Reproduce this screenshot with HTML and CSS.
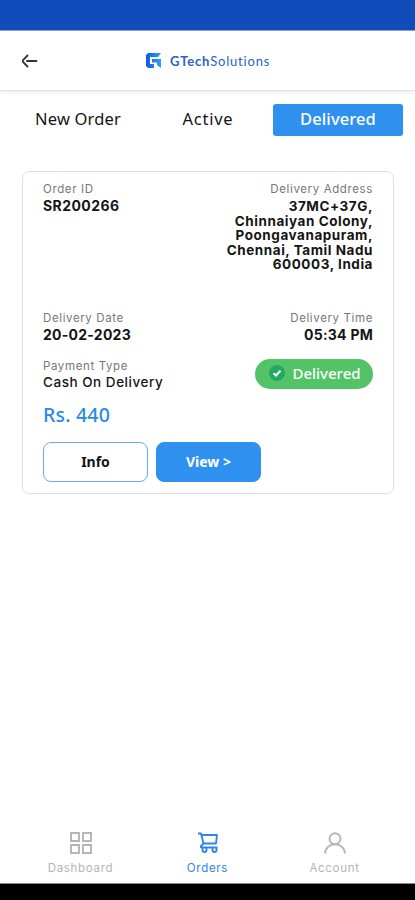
FILE: index.html
```html
<!DOCTYPE html>
<html lang="en">
<head>
<meta charset="utf-8">
<meta name="viewport" content="width=device-width, initial-scale=1">
<title>GTechSolutions Orders</title>
<link rel="stylesheet" href="styles.css">
</head>
<body>
<div class="status"></div>
<header class="header">
  <svg class="back" viewBox="0 0 16 14" fill="none" stroke="#333" stroke-width="1.800" stroke-linecap="round" stroke-linejoin="round"><path d="M14.500 7H5M5.500 1.500L1.200 5.800Q.3 7 1.200 8.200L5.500 12.500"/></svg>
  <div class="brand">
    <svg class="logo" viewBox="0 0 15 15"><defs><linearGradient id="g" x1="0" y1="0" x2="1" y2="0"><stop offset="0" stop-color="#1557e0"/><stop offset="1" stop-color="#2ba2f8"/></linearGradient></defs><path fill="url(#g)" d="M2 0H15L12 4H4V11H8V15H2L0 13V2ZM6 6H15V15L11 12V9.500H6Z"/></svg>
    <span class="name"><b>GTech</b>Solutions</span>
  </div>
</header>
<nav class="tabs">
  <a class="tab"><span class="t-new">New Order</span></a>
  <a class="tab"><span class="t-act">Active</span></a>
  <a class="tab on"><span class="t-del">Delivered</span></a>
</nav>
<main class="card">
  <div class="row first">
    <div><p class="label">Order ID</p><p class="value v-id">SR200266</p></div>
    <div class="right"><p class="label">Delivery Address</p>
      <p class="value address">37MC+37G,<br>Chinnaiyan Colony,<br>Poongavanapuram,<br>Chennai, Tamil Nadu<br>600003, India</p></div>
  </div>
  <div class="row second">
    <div><p class="label">Delivery Date</p><p class="value">20-02-2023</p></div>
    <div class="right"><p class="label">Delivery Time</p><p class="value">05:34 PM</p></div>
  </div>
  <div class="row third">
    <div><p class="label">Payment Type</p><p class="value cash">Cash On Delivery</p></div>
    <div class="pill"><svg viewBox="0 0 16 16"><circle cx="8" cy="8" r="8" fill="#24a865"/><path d="M4.500 8.200L7 10.500L11.500 5.700" fill="none" stroke="#fff" stroke-width="2"/></svg><span>Delivered</span></div>
  </div>
  <p class="price">Rs. 440</p>
  <div class="actions"><button class="btn">Info</button><button class="btn fill">View &gt;</button></div>
</main>
<nav class="bottom">
  <a class="item"><svg viewBox="0 0 22 22" fill="none" stroke="currentColor" stroke-width="1.900"><path d="M1 1h8v8H1zM13 1h8v8h-8zM1 13h8v8H1zM13 13h8v8h-8z"/></svg><span>Dashboard</span></a>
  <a class="item active"><svg viewBox="0 0 22 22" fill="none" stroke="currentColor" stroke-width="1.900" stroke-linejoin="round"><path d="M1 1.500h3l2.500 10h12.500L20 3H4.500M6.500 11.500L4 14q-.5 1.500 1 1.500h15.500"/><path d="M5.500 16v2a2 2 0 0 0 4 0v-2M15.500 16v2a2 2 0 0 0 4 0v-2"/></svg><span>Orders</span></a>
  <a class="item"><svg viewBox="0 0 22 22" fill="none" stroke="currentColor" stroke-width="1.900"><circle cx="11" cy="6.800" r="5.500"/><path d="M1 21.500C1.500 15.500 6 12.300 11 12.300s9.500 3.200 10 9.200"/></svg><span>Account</span></a>
</nav>
<div class="system"></div>
</body>
</html>
```
FILE: styles.css
```css
* { box-sizing: border-box; }
body { margin: 0; height: 900px; display: flex; flex-direction: column; background: #fff; color: #151515; font-family: "Noto Sans", sans-serif; overflow: hidden; }
p { margin: 0; white-space: nowrap; }
.status { height: 31px; background: #104cba; border-bottom: 1px solid #8ba5dc; flex: none; }
.header { height: 60px; flex: none; display: grid; grid-template-columns: 124px auto; align-items: center; padding-left: 22px; border-bottom: 1px solid #e5e5e5; box-shadow: 0 1px 4px #0000001a; }
.back { width: 16px; height: 14px; }
.brand { display: flex; align-items: center; gap: 9px; }
.logo { width: 15px; height: 15px; }
.name { font: 13px/18px Lato, sans-serif; color: #2860d5; letter-spacing: .8px; white-space: nowrap; }
.tabs { height: 32px; margin: 13px 12px 0 13px; display: grid; grid-template-columns: 130px 130px 130px; flex: none; }
.tab { display: flex; justify-content: center; align-items: center; font-size: 16.500px; line-height: 20px; border-radius: 3px; padding-bottom: 2px; }
.on { background: #2f91ef; color: #fff; font-weight: 500; }
.t-new { letter-spacing: .15px; }
.t-act { letter-spacing: .75px; }
.t-del { letter-spacing: .1px; }
.card { width: 372px; height: 323px; margin: 35px 0 0 22px; border: 1.500px solid #dfdfdf; border-radius: 7px; padding: 9px 20px 0 20px; flex: none; }
.row { display: flex; justify-content: space-between; }
.first { height: 129px; }
.second { height: 48px; }
.third { height: 42px; }
.right { text-align: right; }
.label { font-family: Inter, sans-serif; font-size: 11.500px; line-height: 16px; color: #777; letter-spacing: .62px; }
.value { font-family: Inter, sans-serif; font-size: 14px; line-height: 17px; font-weight: 700; letter-spacing: .25px; }
.v-id { letter-spacing: .42px; }
.address { font-size: 13.500px; line-height: 14.500px; padding-top: 2px; letter-spacing: .55px; }
.cash { font-weight: 500; font-size: 13.500px; letter-spacing: .53px; }
.pill { width: 118px; height: 30px; margin-top: 1px; background: #53c466; color: #fff; border-radius: 15px; display: flex; align-items: center; justify-content: center; gap: 7px; font-size: 15px; font-weight: 500; padding: 0 0 2px 2px; }
.pill svg { width: 16px; height: 16px; }
.price { color: #278be9; font-size: 19.500px; line-height: 26px; font-weight: 500; margin-top: 2px; letter-spacing: .2px; }
.actions { display: flex; gap: 8px; margin-top: 14px; }
.btn { width: 105px; height: 40px; border-radius: 8px; border: 1px solid #6ea9f3; background: #fff; color: #151515; font: 700 14px "Noto Sans", sans-serif; padding: 0 0 2px; }
.fill { background: #2f91ef; color: #fff; border-color: #2f91ef; }
.bottom { margin: auto 17px 0; height: 51px; display: grid; grid-template-columns: repeat(3, 1fr); flex: none; }
.item { display: flex; flex-direction: column; align-items: center; color: #b5b5b5; font-family: Inter, sans-serif; font-size: 11.500px; line-height: 16px; gap: 6px; letter-spacing: .7px; }
.item svg { width: 22px; height: 22px; }
.active { color: #2f85e9; }
.system { height: 17px; background: #000; border-top: 1px solid #888; flex: none; }
```
